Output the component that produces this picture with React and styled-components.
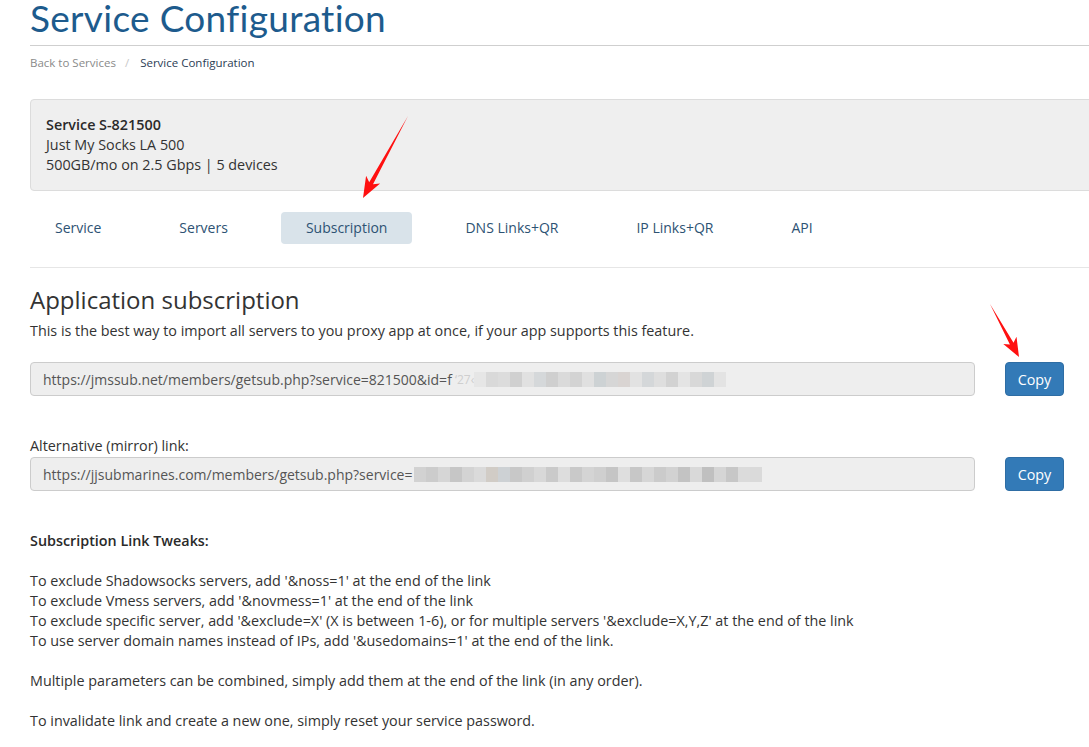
import React from "react";
import styled, { createGlobalStyle } from "styled-components";

const tabs = ["Service", "Servers", "Subscription", "DNS Links+QR", "IP Links+QR", "API"];

const shadesA = ["#e6e6e6", "#d9d9d9", "#dcdcdc", "#d0d0d0", "#e1e1e1", "#d5d8da", "#cfcfcf", "#dadada", "#d3d3d3", "#e0e0e0", "#cdd2d4", "#d6d6d6", "#d9d4d2", "#e2e2e2", "#d4d7d9", "#dedede", "#d2d2d2", "#e4e4e4", "#d8d8d8", "#cfd3d5", "#e3e3e3"];
const shadesB = ["#d2d2d2", "#cccccc", "#d6d6d6", "#c6c6c6", "#d3d3d3", "#dadada", "#d1ccc6", "#cdd1d4", "#c8c8c8", "#d0d0d0", "#d8d8d8", "#cacaca", "#dddddd", "#c9c9c9", "#d4d4d4", "#cfcfcf", "#c5c5c5", "#dedede", "#c7c7c7", "#d6d6d6", "#cbcbcb", "#d2d2d2", "#c3c3c3", "#d9d9d9", "#c0c0c0", "#d5d5d5", "#c7c7c7", "#dbdbdb", "#dadada"];

const tweaks = [
  "To exclude Shadowsocks servers, add '&noss=1' at the end of the link",
  "To exclude Vmess servers, add '&novmess=1' at the end of the link",
  "To exclude specific server, add '&exclude=X' (X is between 1-6), or for multiple servers '&exclude=X,Y,Z' at the end of the link",
  "To use server domain names instead of IPs, add '&usedomains=1' at the end of the link.",
];

function arrowPoints(tx, ty, px, py, head, half, neck) {
  const dx = px - tx;
  const dy = py - ty;
  const len = Math.sqrt(dx * dx + dy * dy);
  const ux = dx / len;
  const uy = dy / len;
  const nx = -uy;
  const ny = ux;
  const bx = px - ux * head;
  const by = py - uy * head;
  const bx2 = px - ux * head * 0.8;
  const by2 = py - uy * head * 0.8;
  const pts = [
    [tx, ty],
    [bx2 + nx * neck, by2 + ny * neck],
    [bx + nx * half, by + ny * half],
    [px, py],
    [bx - nx * half, by - ny * half],
    [bx2 - nx * neck, by2 - ny * neck],
  ];
  return pts.map((p) => p[0].toFixed(1) + "," + p[1].toFixed(1)).join(" ");
}

function App() {
  return (
    <Page>
      <GlobalStyle />
      <Content>
        <TitleBar>
          <Title>Service Configuration</Title>
        </TitleBar>
        <Crumbs>
          <CrumbLink>Back to Services</CrumbLink>
          <CrumbSep>/</CrumbSep>
          <CrumbCurrent>Service Configuration</CrumbCurrent>
        </Crumbs>

        <ServiceBox>
          <strong>Service S-821500</strong>
          <span>Just My Socks LA 500</span>
          <span>500GB/mo on 2.5 Gbps | 5 devices</span>
        </ServiceBox>

        <TabRow>
          {tabs.map((t) => (
            <Tab key={t} $active={t === "Subscription"}>
              {t}
            </Tab>
          ))}
        </TabRow>

        <SectionTitle>Application subscription</SectionTitle>
        <Lead>This is the best way to import all servers to you proxy app at once, if your app supports this feature.</Lead>

        <LinkRow>
          <UrlField>
            https://jmssub.net/members/getsub.php?service=821500&amp;id=f<Faint>&nbsp;‘27‹</Faint>
            <Mosaic $gap={0}>
              {shadesA.map((c, i) => (
                <Block key={i} style={{ background: c }} />
              ))}
            </Mosaic>
          </UrlField>
          <CopyButton>Copy</CopyButton>
        </LinkRow>

        <FieldLabel>Alternative (mirror) link:</FieldLabel>
        <LinkRow $tight>
          <UrlField>
            https://jjsubmarines.com/members/getsub.php?service=
            <Mosaic $gap={2}>
              {shadesB.map((c, i) => (
                <Block key={i} style={{ background: c }} />
              ))}
            </Mosaic>
          </UrlField>
          <CopyButton>Copy</CopyButton>
        </LinkRow>

        <Notes>
          <NoteTitle>Subscription Link Tweaks:</NoteTitle>
          <NoteBlock>
            {tweaks.map((t) => (
              <div key={t}>{t}</div>
            ))}
          </NoteBlock>
          <NoteBlock>Multiple parameters can be combined, simply add them at the end of the link (in any order).</NoteBlock>
          <NoteBlock>To invalidate link and create a new one, simply reset your service password.</NoteBlock>
        </Notes>
      </Content>

      <Annotations viewBox="0 0 1089 747" width="1089" height="747">
        <polygon points={arrowPoints(408, 116, 363, 198, 21, 8, 2.2)} fill="#ff1010" />
        <polygon points={arrowPoints(990, 304, 1019, 357, 19, 7.5, 2)} fill="#ff1010" />
      </Annotations>
    </Page>
  );
}

export default App;

const GlobalStyle = createGlobalStyle`
  html, body {
    margin: 0;
    padding: 0;
    background: #fff;
    overflow: hidden;
  }
  body {
    font-family: "Open Sans", "Liberation Sans", sans-serif;
    font-size: 14.35px;
    color: #333;
  }
`;

const Page = styled.div`
  position: relative;
  width: 1089px;
  height: 747px;
  overflow: hidden;
`;

const Content = styled.div`
  width: 1100px;
  padding-left: 30px;
`;

const TitleBar = styled.div`
  display: flow-root;
  border-bottom: 1px solid #cfcfcf;
  height: 45px;
`;

const Title = styled.h1`
  margin: 0;
  margin-top: -9px;
  font-family: "Lato", "Open Sans", sans-serif;
  font-weight: 400;
  font-size: 37px;
  line-height: 54px;
  color: #1d5b8d;
  letter-spacing: 0.3px;
`;

const Crumbs = styled.div`
  display: flex;
  align-items: center;
  height: 32px;
  font-size: 11.5px;
`;

const CrumbLink = styled.span`
  color: #8a8a8a;
`;

const CrumbSep = styled.span`
  color: #c8c8c8;
  margin: 0 11px 0 9px;
`;

const CrumbCurrent = styled.span`
  color: #2b3d55;
`;

const ServiceBox = styled.div`
  margin-top: 21px;
  display: flex;
  flex-direction: column;
  padding: 15px;
  line-height: 20px;
  background: #efefef;
  border: 1px solid #dcdcdc;
  border-radius: 4px;
  strong {
    font-weight: 600;
    color: #2a2a2a;
  }
`;

const TabRow = styled.div`
  display: flex;
  gap: 28px;
  margin-top: 21px;
  padding-bottom: 23px;
  border-bottom: 1px solid #e6e6e6;
`;

const Tab = styled.div`
  height: 32px;
  line-height: 32px;
  padding: 0 25px;
  border-radius: 4px;
  font-size: 14px;
  color: #2d5273;
  background: ${(p) => (p.$active ? "#d9e3ea" : "transparent")};
`;

const SectionTitle = styled.h2`
  margin: 17px 0 0;
  font-weight: 400;
  font-size: 24px;
  line-height: 30px;
  color: #333;
`;

const Lead = styled.p`
  margin: 6px 0 0;
  line-height: 20px;
`;

const LinkRow = styled.div`
  display: flex;
  gap: 30px;
  margin-top: ${(p) => (p.$tight ? 1 : 21)}px;
`;

const UrlField = styled.div`
  box-sizing: border-box;
  width: 945px;
  height: 34px;
  display: flex;
  align-items: center;
  padding: 0 12px;
  background: #eeeeee;
  border: 1px solid #cccccc;
  border-radius: 4px;
  font-size: 14px;
  color: #555;
  white-space: nowrap;
  overflow: hidden;
`;

const Faint = styled.span`
  color: #cfcfcf;
  font-size: 12px;
`;

const Mosaic = styled.span`
  display: inline-flex;
  margin-left: ${(p) => p.$gap}px;
`;

const Block = styled.span`
  display: inline-block;
  width: 12px;
  height: 15px;
`;

const CopyButton = styled.button`
  box-sizing: border-box;
  width: 59px;
  height: 34px;
  padding: 0;
  font-family: "Open Sans", sans-serif;
  font-size: 14.35px;
  color: #fff;
  background: #337ab7;
  border: 1px solid #2e6da4;
  border-radius: 4px;
`;

const FieldLabel = styled.div`
  margin-top: 40px;
  line-height: 20px;
`;

const Notes = styled.div`
  margin-top: 40px;
  line-height: 20px;
`;

const NoteTitle = styled.div`
  font-weight: 600;
  color: #2a2a2a;
`;

const NoteBlock = styled.div`
  margin-top: 20px;
`;

const Annotations = styled.svg`
  position: absolute;
  left: 0;
  top: 0;
  pointer-events: none;
`;
